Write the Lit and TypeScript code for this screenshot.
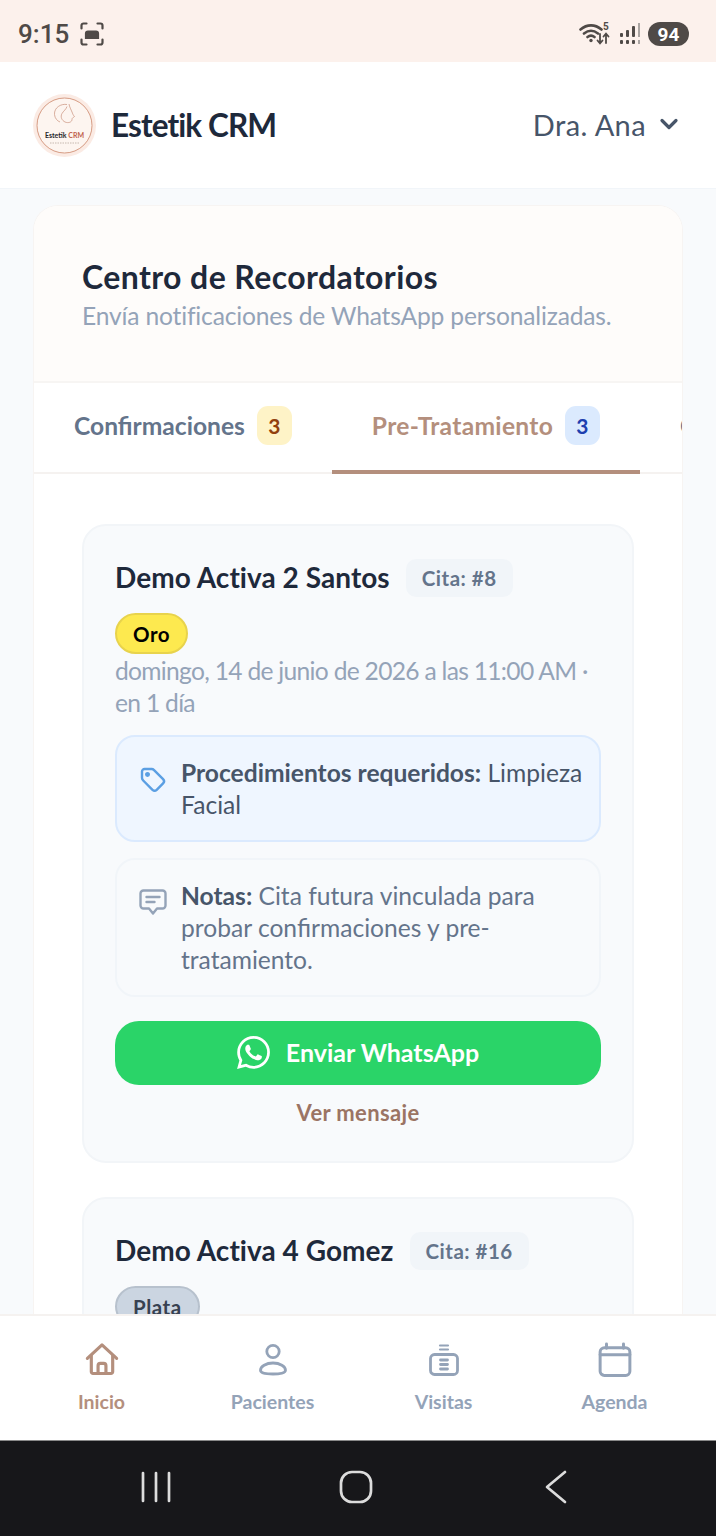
import { LitElement, html, css, svg } from 'lit';
import { customElement } from 'lit/decorators.js';

const WA =
  'M17.472 14.382c-.297-.149-1.758-.867-2.03-.967-.273-.099-.471-.148-.67.15-.197.297-.767.966-.94 1.164-.173.199-.347.223-.644.075-.297-.15-1.255-.463-2.39-1.475-.883-.788-1.48-1.761-1.653-2.059-.173-.297-.018-.458.13-.606.134-.133.298-.347.446-.52.149-.174.198-.298.298-.497.099-.198.05-.371-.025-.52-.075-.149-.669-1.612-.916-2.207-.242-.579-.487-.5-.669-.51-.173-.008-.371-.01-.57-.01-.198 0-.52.074-.792.372-.272.297-1.04 1.016-1.04 2.479 0 1.462 1.065 2.875 1.213 3.074.149.198 2.096 3.2 5.077 4.487.709.306 1.262.489 1.694.625.712.227 1.36.195 1.871.118.571-.085 1.758-.719 2.006-1.413.248-.694.248-1.289.173-1.413-.074-.124-.272-.198-.57-.347m-5.421 7.403h-.004a9.87 9.87 0 01-5.031-1.378l-.361-.214-3.741.982.998-3.648-.235-.374a9.86 9.86 0 01-1.51-5.26c.001-5.45 4.436-9.884 9.888-9.884 2.64 0 5.122 1.03 6.988 2.898a9.825 9.825 0 012.893 6.994c-.003 5.45-4.437 9.884-9.885 9.884m8.413-18.297A11.815 11.815 0 0012.05 0C5.495 0 .16 5.335.157 11.892c0 2.096.547 4.142 1.588 5.945L.057 24l6.305-1.654a11.882 11.882 0 005.683 1.448h.005c6.554 0 11.89-5.335 11.893-11.893a11.821 11.821 0 00-3.48-8.413z';

const navIcons = {
  home: svg`<path d="M3 14.5 16 2.5l13 12" /><path d="M6.5 12v14.5a1.5 1.5 0 0 0 1.5 1.5h16a1.5 1.5 0 0 0 1.5-1.5V12" /><path d="M12.5 28v-7a2 2 0 0 1 2-2h3a2 2 0 0 1 2 2v7" />`,
  user: svg`<circle cx="16" cy="7.5" r="6.2" /><path d="M16 19c-7 0-12.5 3.6-12.5 7.2 0 2.6 5.5 3.8 12.5 3.8s12.5-1.2 12.5-3.8C28.5 22.6 23 19 16 19Z" />`,
  visit: svg`<rect x="2.5" y="10.5" width="27" height="20" rx="4" /><path d="M12 1.5h8M12 5.5h8" stroke-width="2.2" /><path d="M12.5 16h7M12.5 20.500h7M12.5 25h7" />`,
  cal: svg`<rect x="2" y="4.500" width="28" height="26" rx="4" /><path d="M2 11h28" /><path d="M8 1v4M24 1v4" />`,
};

@customElement('app-root')
export class AppRoot extends LitElement {
  static styles = css`
    :host {
      display: flex;
      flex-direction: column;
      width: 716px;
      height: 1536px;
      overflow: hidden;
      font-family: 'Lato', 'Noto Sans', sans-serif;
      background: #f8fafc;
      color: #1e293b;
    }

    .status {
      flex: none;
      height: 62px;
      box-sizing: border-box;
      background: #fcf1ec;
      display: flex;
      align-items: center;
      padding: 6px 27px 0 18px;
      color: #4f4a47;
      font-family: 'Roboto', sans-serif;
    }
    .time {
      font-size: 26px;
      font-weight: 500;
    }
    .shot {
      margin-left: 11px;
    }
    .status-right {
      margin-left: auto;
      display: flex;
      align-items: center;
      gap: 8px;
    }
    .batt {
      width: 41px;
      height: 24px;
      border-radius: 12px;
      background: #4f4a47;
      color: #fff;
      font-size: 19px;
      font-weight: 700;
      display: flex;
      align-items: center;
      justify-content: center;
    }

    .header {
      flex: none;
      height: 127px;
      box-sizing: border-box;
      background: #fff;
      border-bottom: 1px solid #f1f5f9;
      display: flex;
      align-items: center;
      padding: 0 37px 0 33px;
    }
    .brand {
      margin-left: 15px;
      font-size: 31.5px;
      font-weight: 700;
      letter-spacing: -0.9px;
    }
    .user {
      margin-left: auto;
      display: flex;
      align-items: center;
      gap: 13px;
      font-size: 29px;
      color: #475569;
      letter-spacing: 0.4px;
      padding-bottom: 2px;
    }

    main {
      flex: 1;
      min-height: 0;
      overflow: hidden;
      padding: 17px 34px 0;
    }
    .panel {
      background: #fff;
      border-radius: 24px 24px 0 0;
      box-shadow: 0 0 0 1px #f7f4f2;
    }
    .panel-head {
      box-sizing: border-box;
      height: 177px;
      padding: 52px 48px 0;
      background: #fefcfa;
      border-radius: 24px 24px 0 0;
      border-bottom: 2px solid #f7f5f3;
    }
    .panel-head h1 {
      margin: 0;
      font-size: 32px;
      line-height: 38px;
      font-weight: 700;
      letter-spacing: 0.4px;
    }
    .panel-head p {
      margin: 1px 0 0;
      font-size: 24.6px;
      line-height: 38px;
      letter-spacing: -0.17px;
      color: #94a3b8;
    }

    .tabs {
      height: 91px;
      box-shadow: inset 0 -2px 0 #f5f2f0;
      display: flex;
      overflow: hidden;
    }
    .tab {
      flex: none;
      box-sizing: border-box;
      height: 91px;
      display: flex;
      align-items: center;
      gap: 12px;
      padding: 0 40px 2px;
      font-size: 24.6px;
      font-weight: 700;
      color: #64748b;
      border-bottom: 4px solid transparent;
      white-space: nowrap;
    }
    .tab.active {
      color: #b48f7d;
      border-bottom-color: #b48f7d;
      letter-spacing: 0.3px;
    }
    .count {
      width: 35px;
      height: 39px;
      border-radius: 11px;
      display: flex;
      align-items: center;
      justify-content: center;
      font-size: 21px;
    }
    .count.amber {
      background: #fef3c7;
      color: #92400e;
    }
    .count.blue {
      background: #dbeafe;
      color: #1e40af;
    }

    .list {
      padding: 50px 48px 0;
      display: flex;
      flex-direction: column;
      gap: 34px;
    }
    .card {
      box-sizing: border-box;
      background: #f8fafc;
      border: 2px solid #f2f5f8;
      border-radius: 24px;
      padding: 33px 31px 34px;
    }
    .card-top {
      display: flex;
      align-items: center;
      gap: 16px;
    }
    .name {
      font-size: 28px;
      line-height: 36px;
      padding-bottom: 2px;
      font-weight: 700;
      letter-spacing: 0.05px;
    }
    .cita {
      background: #f1f5f9;
      color: #64748b;
      font-size: 20.5px;
      font-weight: 700;
      letter-spacing: 0.5px;
      height: 38px;
      padding: 0 16px;
      border-radius: 10px;
      display: flex;
      align-items: center;
    }
    .tier {
      display: inline-flex;
      align-items: center;
      box-sizing: border-box;
      height: 41px;
      margin-top: 16px;
      padding: 0 16px;
      border-radius: 21px;
      border: 2px solid;
      font-size: 20.5px;
      font-weight: 700;
      letter-spacing: 0.5px;
      vertical-align: top;
    }
    .tier.gold {
      background: #fde94f;
      border-color: #e8d34c;
      color: #000;
    }
    .tier.silver {
      background: #cbd5e1;
      border-color: #b7c1cd;
      color: #374151;
    }
    .when {
      margin-top: 1px;
      font-size: 24.6px;
      line-height: 32px;
      letter-spacing: -0.7px;
      color: #94a3b8;
    }
    .box {
      margin-top: 16px;
      box-sizing: border-box;
      border: 2px solid #f1f5f9;
      border-radius: 20px;
      padding: 19.5px 12px 19.5px 22px;
      display: flex;
      gap: 14px;
      font-size: 24.6px;
      line-height: 32px;
      color: #64748b;
    }
    .box svg {
      flex: none;
      margin-top: 9px;
    }
    .box b {
      color: #475569;
      font-weight: 700;
    }
    .box.info {
      background: #eff6ff;
      border-color: #dbeafe;
      color: #475569;
    }
    .box.note {
      background: #f8fafc;
    }
    .send {
      margin-top: 24px;
      height: 64px;
      box-sizing: border-box;
      padding-bottom: 2px;
      border-radius: 24px;
      background: #2ad468;
      color: #fff;
      display: flex;
      align-items: center;
      justify-content: center;
      gap: 16px;
      font-size: 25px;
      font-weight: 700;
    }
    .more {
      margin-top: 14px;
      text-align: center;
      font-size: 22px;
      line-height: 28px;
      font-weight: 700;
      letter-spacing: 0.35px;
      color: #9b7464;
    }

    .bottom {
      flex: none;
      height: 126px;
      box-sizing: border-box;
      background: #fff;
      border-top: 2px solid #f5f2f0;
      padding: 0 16px;
      display: grid;
      grid-template-columns: repeat(4, 1fr);
    }
    .item {
      display: flex;
      flex-direction: column;
      align-items: center;
      padding-top: 26px;
      color: #94a3b8;
      font-size: 19.5px;
      font-weight: 700;
      line-height: 26px;
      gap: 11px;
    }
    .item svg {
      fill: none;
      stroke: currentColor;
      stroke-width: 2.8;
      stroke-linecap: round;
      stroke-linejoin: round;
    }
    .item.active {
      color: #b48f7d;
    }

    .android {
      flex: none;
      height: 96px;
      box-sizing: border-box;
      background: #17171a;
      border-top: 1px solid #8a8a8a;
      padding: 0 4px 4px 0;
      display: grid;
      grid-template-columns: repeat(3, 200px);
      justify-content: center;
      align-items: center;
      justify-items: center;
    }
  `;

  private card(name: string, cita: string, tierClass: string, tier: string, full: boolean) {
    return html`
      <article class="card">
        <div class="card-top">
          <span class="name">${name}</span>
          <span class="cita">Cita: ${cita}</span>
        </div>
        <span class="tier ${tierClass}">${tier}</span>
        ${full
          ? html`
              <div class="when">domingo, 14 de junio de 2026 a las 11:00 AM · en 1 día</div>
              <div class="box info">
                <svg width="28" height="28" viewBox="0 0 28 28" fill="none" stroke="#5b9fe3" stroke-width="2.4" stroke-linejoin="round">
                  <path d="M3 5.500A2.500 2.500 0 0 1 5.500 3h7.200a3 3 0 0 1 2.100.900l9.300 9.300a3 3 0 0 1 0 4.200l-6.400 6.400a3 3 0 0 1-4.200 0L4.200 14.500A4 4 0 0 1 3 11.700Z" />
                  <circle cx="8.500" cy="8.500" r="1.300" fill="#5b9fe3" />
                </svg>
                <div><b>Procedimientos requeridos:</b> Limpieza Facial</div>
              </div>
              <div class="box note">
                <svg width="28" height="28" viewBox="0 0 28 28" fill="none" stroke="#94a3b8" stroke-width="2.4" stroke-linecap="round" stroke-linejoin="round">
                  <path d="M4.500 1.500h19a3 3 0 0 1 3 3v12a3 3 0 0 1-3 3H18l-4 5-4-5H4.500a3 3 0 0 1-3-3v-12a3 3 0 0 1 3-3Z" />
                  <path d="M7.500 8h13M7.500 13h8" />
                </svg>
                <div><b>Notas:</b> Cita futura vinculada para probar confirmaciones y pre-tratamiento.</div>
              </div>
              <div class="send">
                <svg width="33" height="33" viewBox="0 0 24 24" fill="#fff"><path d=${WA} /></svg>
                Enviar WhatsApp
              </div>
              <div class="more">Ver mensaje</div>
            `
          : ''}
      </article>
    `;
  }

  private navItem(icon: keyof typeof navIcons, label: string, w: number, active = false) {
    return html`
      <div class="item ${active ? 'active' : ''}">
        <svg width=${w} height="36" viewBox="0 0 32 32">${navIcons[icon]}</svg>
        ${label}
      </div>
    `;
  }

  render() {
    return html`
      <div class="status">
        <span class="time">9:15</span>
        <svg class="shot" width="24" height="24" viewBox="0 0 24 24" fill="none" stroke="#4f4a47" stroke-width="2.2" stroke-linecap="round">
          <path d="M1.500 6.500v-3a2 2 0 0 1 2-2h3M17.500 1.500h3a2 2 0 0 1 2 2v3M22.500 17.500v3a2 2 0 0 1-2 2h-3M6.500 22.500h-3a2 2 0 0 1-2-2v-3" />
          <path d="M6 16v-4.500a2 2 0 0 1 2-2h8a2 2 0 0 1 2 2V16Z" fill="#4f4a47" />
        </svg>
        <div class="status-right">
          <svg width="32" height="26" viewBox="0 0 32 26" fill="none" stroke="#4f4a47" stroke-linecap="round">
            <path stroke-width="2.6" d="M1.500 8.500C8 3 16 3 22.500 8.500M5 12.500c4.500-3.500 9.500-3.500 14 0M8.500 16c2.200-1.700 4.800-1.700 7 0" />
            <circle cx="12" cy="19.500" r="1.700" fill="#4f4a47" stroke="none" />
            <path stroke-width="1.8" d="M21 13v9M18.500 19.500l2.500 2.800 2.500-2.800M27 22v-9M24.500 15.500 27 12.700l2.500 2.800" />
            <text x="24" y="9" font-size="10" font-weight="700" fill="#4f4a47" stroke="none">5</text>
          </svg>
          <svg width="21" height="22" viewBox="0 0 21 22" fill="#4f4a47">
            <rect x="1" y="10" width="3" height="4" rx="1" />
            <rect x="7" y="7" width="3" height="7" rx="1" />
            <rect x="13" y="3" width="3" height="11" rx="1" />
            <rect x="19" y="0" width="2" height="14" fill="#aaa5a2" />
            <rect x="1" y="17" width="3" height="4" rx="1" />
            <rect x="7" y="17" width="3" height="4" rx="1" />
            <rect x="13" y="17" width="3" height="4" rx="1" />
            <rect x="19" y="17" width="2" height="4" fill="#aaa5a2" />
          </svg>
          <span class="batt">94</span>
        </div>
      </div>

      <header class="header">
        <svg width="63" height="63" viewBox="0 0 63 63">
          <circle cx="31.500" cy="31.500" r="31.500" fill="#fbebe4" />
          <circle cx="31.500" cy="31.500" r="27.500" fill="#fdf5f0" stroke="#d69c84" stroke-width="1" />
          <g fill="none" stroke="#c98f7a" stroke-width="0.7">
            <path d="M34 10.500c-6-1-13 3-12.500 10 .3 4 3 6.500 5.500 7.500" />
            <path d="M36 10c.5 3 2 5.500 3 8 .6 1.500 1 3 2.500 4.500-1 1-2.500 1-2.500 3 0 2.500-3.500 4-7 2.500-3-1.500-5-5-3-8.500 1.500-2.500 4-4 5-7" />
          </g>
          <text x="31.500" y="44" text-anchor="middle" font-size="7" font-weight="700" fill="#27272a" font-family="Lato, sans-serif">Estetik <tspan fill="#c0604b">CRM</tspan></text>
          <path d="M17 49h29" stroke="#b8a8a0" stroke-width="0.8" stroke-dasharray="1.500 1" />
        </svg>
        <span class="brand">Estetik CRM</span>
        <div class="user">
          Dra. Ana
          <svg width="20" height="14" viewBox="0 0 20 14" fill="none" stroke="#475569" stroke-width="3.2" stroke-linecap="round" stroke-linejoin="round"><path d="M3 3.500 10 10.500l7-7" /></svg>
        </div>
      </header>

      <main>
        <section class="panel">
          <div class="panel-head">
            <h1>Centro de Recordatorios</h1>
            <p>Envía notificaciones de WhatsApp personalizadas.</p>
          </div>
          <nav class="tabs">
            <div class="tab">Confirmaciones <span class="count amber">3</span></div>
            <div class="tab active">Pre-Tratamiento <span class="count blue">3</span></div>
            <div class="tab">Cumpleaños</div>
          </nav>
          <div class="list">
            ${this.card('Demo Activa 2 Santos', '#8', 'gold', 'Oro', true)}
            ${this.card('Demo Activa 4 Gomez', '#16', 'silver', 'Plata', false)}
          </div>
        </section>
      </main>

      <nav class="bottom">
        ${this.navItem('home', 'Inicio', 36, true)}
        ${this.navItem('user', 'Pacientes', 32)}
        ${this.navItem('visit', 'Visitas', 32)}
        ${this.navItem('cal', 'Agenda', 34)}
      </nav>

      <div class="android">
        <svg width="32" height="32" viewBox="0 0 32 32" stroke="#dcdcdc" stroke-width="2.7" stroke-linecap="round"><path d="M3 2v28M16 2v28M29 2v28" /></svg>
        <svg width="34" height="34" viewBox="0 0 34 34" fill="none" stroke="#dcdcdc" stroke-width="2.7"><rect x="2" y="2" width="30" height="30" rx="11" /></svg>
        <svg width="22" height="34" viewBox="0 0 22 34" fill="none" stroke="#dcdcdc" stroke-width="2.7" stroke-linecap="round" stroke-linejoin="round"><path d="M20 2 2 17l18 15" /></svg>
      </div>
    `;
  }
}
